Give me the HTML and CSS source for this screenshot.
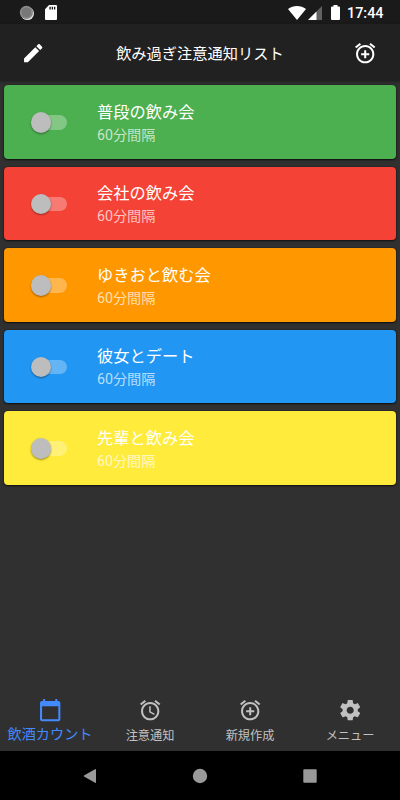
FILE: index.html
```html
<!DOCTYPE html>
<html lang="ja">
<head>
<meta charset="utf-8">
<title>飲み過ぎ注意通知リスト</title>
<link rel="stylesheet" href="styles.css">
</head>
<body>
<svg class="defs" aria-hidden="true">
  <symbol id="alarm" viewBox="0 0 24 24"><path d="M22 5.72l-4.6-3.86-1.29 1.53 4.6 3.86L22 5.72zM7.88 3.39L6.6 1.86 2 5.71l1.29 1.53 4.59-3.85zM12.5 8H11v6l4.75 2.85.75-1.23-4-2.37V8zM12 4c-4.97 0-9 4.03-9 9s4.02 9 9 9c4.97 0 9-4.03 9-9s-4.03-9-9-9zm0 16c-3.87 0-7-3.13-7-7s3.13-7 7-7 7 3.13 7 7-3.13 7-7 7z"/></symbol>
  <symbol id="alarm-add" viewBox="0 0 24 24"><path d="M7.88 3.39L6.6 1.86 2 5.71l1.29 1.53 4.59-3.85zM22 5.72l-4.6-3.86-1.29 1.53 4.6 3.86L22 5.72zM12 4c-4.97 0-9 4.03-9 9s4.02 9 9 9c4.97 0 9-4.03 9-9s-4.03-9-9-9zm0 16c-3.87 0-7-3.13-7-7s3.13-7 7-7 7 3.13 7 7-3.13 7-7 7zm1-11h-2v3H8v2h3v3h2v-3h3v-2h-3V9z"/></symbol>
</svg>
<div class="screen">
  <div class="status">
    <svg class="sync" viewBox="0 0 16 16"><circle cx="8.4" cy="8.5" r="6.600" fill="#e2e2e2"/><circle cx="7.4" cy="7.4" r="6.600" fill="#858585"/><circle cx="7.4" cy="7.4" r="5.3" fill="#777" stroke="#a5a5a5" stroke-dasharray="1 1.4"/></svg>
    <svg class="sd" viewBox="0 0 12 15"><path fill="#fff" fill-rule="evenodd" d="M4 0h7q1 0 1 1v13q0 1-1 1H1q-1 0-1-1V4.300zM4.400 1.700v2.700h1.400V1.700zm2.300 0v2.700h1.400V1.700zm2.300 0v2.700h1.300V1.700z"/></svg>
    <span class="spacer"></span>
    <svg class="wifi" viewBox="0 0 18 14"><path fill="#fff" d="M0 3.100C5-1 13-1 18 3.100L9 14z"/></svg>
    <svg class="cell" viewBox="0 0 14 14"><path fill="#616161" d="M14 0v14H0z"/><path fill="#fff" d="M8.500 5.500V14H0z"/></svg>
    <svg class="battery" viewBox="0 0 9 15"><path fill="#fff" d="M2.500 0h4v1.500H8q1 0 1 1V14q0 1-1 1H1q-1 0-1-1V2.500q0-1 1-1h1.500z"/></svg>
    <span class="clock">17:44</span>
  </div>
  <header class="appbar">
    <svg class="icon" viewBox="0 0 24 24"><path d="M3 17.250V21h3.750L17.810 9.940l-3.750-3.750L3 17.250zM20.710 7.040c.39-.39.39-1.020 0-1.410l-2.340-2.340c-.39-.39-1.020-.39-1.410 0l-1.830 1.830 3.750 3.750 1.830-1.830z"/></svg>
    <h1>飲み過ぎ注意通知リスト</h1>
    <svg class="icon"><use href="#alarm-add"/></svg>
  </header>
  <main class="list">
    <div class="card green"><span class="switch"><i></i></span><div><p class="name">普段の飲み会</p><p class="sub">60分間隔</p></div></div>
    <div class="card red"><span class="switch"><i></i></span><div><p class="name">会社の飲み会</p><p class="sub">60分間隔</p></div></div>
    <div class="card orange"><span class="switch"><i></i></span><div><p class="name">ゆきおと飲む会</p><p class="sub">60分間隔</p></div></div>
    <div class="card blue"><span class="switch"><i></i></span><div><p class="name">彼女とデート</p><p class="sub">60分間隔</p></div></div>
    <div class="card yellow"><span class="switch"><i></i></span><div><p class="name">先輩と飲み会</p><p class="sub">60分間隔</p></div></div>
  </main>
  <nav class="tabs">
    <div class="tab active"><svg class="icon" viewBox="0 0 24 24"><path d="M20 3h-1V1h-2v2H7V1H5v2H4c-1.100 0-2 .9-2 2v16c0 1.100.9 2 2 2h16c1.100 0 2-.9 2-2V5c0-1.100-.9-2-2-2zm0 18H4V8h16v13z"/></svg><span>飲酒カウント</span></div>
    <div class="tab"><svg class="icon"><use href="#alarm"/></svg><span>注意通知</span></div>
    <div class="tab"><svg class="icon"><use href="#alarm-add"/></svg><span>新規作成</span></div>
    <div class="tab"><svg class="icon" viewBox="0 0 24 24"><path d="M19.430 12.980c.04-.32.07-.64.07-.98s-.03-.66-.07-.98l2.110-1.650c.19-.15.24-.42.12-.64l-2-3.460c-.12-.22-.39-.3-.61-.22l-2.490 1c-.52-.4-1.080-.73-1.690-.98l-.38-2.650C14.460 2.180 14.250 2 14 2h-4c-.25 0-.46.18-.49.42l-.38 2.650c-.61.25-1.170.59-1.690.98l-2.490-1c-.23-.09-.49 0-.61.22l-2 3.460c-.13.22-.07.49.12.64l2.110 1.650c-.04.32-.07.65-.07.98s.03.66.07.98l-2.110 1.650c-.19.15-.24.42-.12.64l2 3.460c.12.22.39.3.61.22l2.490-1c.52.4 1.080.73 1.690.98l.38 2.650c.03.24.24.42.49.42h4c.25 0 .46-.18.49-.42l.38-2.650c.61-.25 1.170-.59 1.690-.98l2.490 1c.23.09.49 0 .61-.22l2-3.460c.12-.22.07-.49-.12-.64l-2.110-1.650zM12 15.500c-1.930 0-3.500-1.570-3.500-3.500s1.570-3.500 3.500-3.500 3.500 1.570 3.500 3.500-1.570 3.500-3.500 3.500z"/></svg><span>メニュー</span></div>
  </nav>
  <div class="system">
    <svg viewBox="0 0 16 16"><path d="M13 1.200q1-.5 1 .5v12.600q0 1-1 .5L2 8.500q-.7-.5 0-1z"/></svg>
    <svg viewBox="0 0 16 16"><circle cx="8" cy="8" r="7.200"/></svg>
    <svg viewBox="0 0 16 16"><rect x="1.300" y="1.300" width="13.400" height="13.400" rx=".7"/></svg>
  </div>
</div>
</body>
</html>
```
FILE: styles.css
```css
* { box-sizing: border-box; }
body, h1, p { margin: 0; font-weight: 400; }
body { background: #303030; font-family: Roboto, "Noto Sans CJK JP", sans-serif; color: #fff; }
.defs { position: absolute; width: 0; height: 0; }
svg { display: block; flex: none; }
.screen { width: 400px; height: 800px; display: flex; flex-direction: column; overflow: hidden; white-space: nowrap; }
.status { height: 24px; flex: none; display: flex; align-items: center; padding: 1px 16px 0 19px; background: #1a1a1a; }
.sync { width: 16px; height: 16px; }
.sd { width: 12px; height: 15px; margin-left: 10px; }
.spacer { flex: 1; }
.wifi { width: 18px; height: 14px; }
.cell { width: 14px; height: 14px; margin-left: 2px; }
.battery { width: 9px; height: 15px; margin-left: 9px; }
.clock { width: 37px; margin-left: 7px; padding-top: 2px; font-size: 14.4px; font-weight: 500; line-height: 22px; }
.icon { width: 24.4px; height: 24.4px; fill: currentColor; }
.appbar { height: 57px; flex: none; display: flex; align-items: center; justify-content: space-between; padding: 1px 22.4px 0 21.4px; background: #212121; box-shadow: 0 1px 3px rgba(0,0,0,.3); }
.appbar h1 { font-size: 15.25px; line-height: 24px; padding: 1px 0 0 1px; }
.list { flex: 1; display: flex; flex-direction: column; gap: 8.1px; padding: 4.4px 4px 0; }
.card { height: 73.4px; flex: none; display: flex; align-items: center; padding: 1px 0 0 29px; border-radius: 4px; box-shadow: 0 1px 2px rgba(0,0,0,.65), 0 0 1px #000; }
.green { background: #4caf50; }
.red { background: #f44336; }
.orange { background: #ff9800; }
.blue { background: #2196f3; }
.yellow { background: #ffeb3b; }
.switch { width: 34.2px; height: 14.4px; margin-right: 29.8px; display: flex; align-items: center; border-radius: 8px; background: rgba(255,255,255,.3); }
.switch i { width: 20.4px; height: 20.4px; flex: none; margin-left: -2.4px; border-radius: 50%; background: #bdbdbd; box-shadow: 0 1px 2px rgba(0,0,0,.4); }
.name { font-size: 16.25px; line-height: 24px; padding-top: .4px; }
.sub { font-size: 14.2px; line-height: 20px; color: rgba(255,255,255,.7); }
.tabs { height: 57px; flex: none; display: flex; color: #c1c1c1; }
.tab { flex: 1; display: flex; flex-direction: column; align-items: center; padding-top: 4.2px; }
.tab span { font-size: 12.2px; line-height: 20px; margin-top: 3.8px; }
.tab.active { color: #448aff; }
.tab.active span { font-size: 14.15px; margin-top: 1.8px; }
.system { height: 49px; flex: none; display: flex; justify-content: center; align-items: center; gap: 94px; background: #000; fill: #999; }
.system svg { width: 16px; height: 16px; }
```
